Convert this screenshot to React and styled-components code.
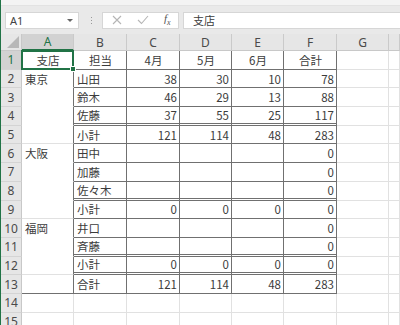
import styled, { createGlobalStyle, css } from 'styled-components';

const GlobalStyle = createGlobalStyle`
  html, body { margin: 0; padding: 0; background: #fff; }
  body { font-family: "Noto Sans CJK JP", "Noto Sans", sans-serif; }
`;

const COLS = ['A', 'B', 'C', 'D', 'E', 'F', 'G', ''];

const DATA = [
  ['支店', '担当', '4月', '5月', '6月', '合計'],
  ['東京', '山田', 38, 30, 10, 78],
  ['', '鈴木', 46, 29, 13, 88],
  ['', '佐藤', 37, 55, 25, 117],
  ['', '小計', 121, 114, 48, 283],
  ['大阪', '田中', '', '', '', 0],
  ['', '加藤', '', '', '', 0],
  ['', '佐々木', '', '', '', 0],
  ['', '小計', 0, 0, 0, 0],
  ['福岡', '井口', '', '', '', 0],
  ['', '斉藤', '', '', '', 0],
  ['', '小計', 0, 0, 0, 0],
  ['', '合計', 121, 114, 48, 283],
  [],
  [],
];

// rows (1-based) whose bottom edge is a double line
const DOUBLE_BOTTOM = [4, 8, 11, 12];
// rows where a new branch group starts in column A
const GROUP_START = [2, 6, 10, 13];

const App = () => {
  const cells = [];
  DATA.forEach((row, r) => {
    const rowNo = r + 1;
    const inTable = rowNo <= 13;
    cells.push(
      <RowHead key={`h${rowNo}`} $active={rowNo === 1}>{rowNo}</RowHead>
    );
    COLS.forEach((col, c) => {
      const value = row[c] ?? '';
      let right = 'light';
      let bottom = 'light';
      if (inTable && c <= 5) {
        right = 'dark';
        if (c === 0) {
          bottom = GROUP_START.includes(rowNo + 1) ? 'light' : 'none';
          if (rowNo === 1 || rowNo === 13) bottom = 'dark';
        } else {
          bottom = DOUBLE_BOTTOM.includes(rowNo) ? 'double' : 'dark';
        }
      }
      const align = rowNo === 1 ? 'center' : typeof value === 'number' ? 'right' : 'left';
      cells.push(
        <Cell
          key={`${col}${rowNo}`}
          $right={right}
          $bottom={bottom}
          $align={align}
          $selected={rowNo === 1 && c === 0}
        >
          {value}
        </Cell>
      );
    });
  });

  return (
    <>
      <GlobalStyle />
      <Window>
        <TopStrip />
        <FormulaBar>
          <NameBox>
            <span>A1</span>
            <DropArrow />
          </NameBox>
          <Grip>
            <i /><i /><i />
          </Grip>
          <ActionBox>
            <Action>
              <svg width="10" height="10" viewBox="0 0 10 10">
                <path d="M1 1 L9 9 M9 1 L1 9" stroke="#b5b5b5" strokeWidth="1.1" />
              </svg>
            </Action>
            <Action>
              <svg width="12" height="10" viewBox="0 0 12 10">
                <path d="M1 5 L4.5 8.5 L11 1" stroke="#b5b5b5" strokeWidth="1.1" fill="none" />
              </svg>
            </Action>
            <FxLabel>
              f<sub>x</sub>
            </FxLabel>
          </ActionBox>
          <Formula>支店</Formula>
        </FormulaBar>
        <Sheet>
          <Corner>
            <svg width="12" height="12" viewBox="0 0 12 12">
              <path d="M12 0 L12 12 L0 12 Z" fill="#b8b8b8" />
            </svg>
          </Corner>
          {COLS.map((col) => (
            <ColHead key={`c${col}`} $active={col === 'A'}>{col}</ColHead>
          ))}
          {cells}
        </Sheet>
      </Window>
    </>
  );
};

export default App;

const Window = styled.div`
  width: 400px;
  height: 325px;
  overflow: hidden;
  border-left: 1px solid #217346;
  box-sizing: border-box;
  background: #fff;
`;

const TopStrip = styled.div`
  height: 5px;
  background: #f3f3f3;
  border-bottom: 1px solid #e2e2e2;
`;

const FormulaBar = styled.div`
  display: flex;
  align-items: center;
  height: 28px;
  padding-left: 4px;
  background: #e9e9e9;
  box-sizing: border-box;
`;

const NameBox = styled.div`
  display: flex;
  align-items: center;
  justify-content: space-between;
  width: 74px;
  height: 17px;
  padding: 0 5px 0 4px;
  box-sizing: border-box;
  background: #fff;
  border: 1px solid #d6d6d6;
  font-family: "Noto Sans", sans-serif;
  font-size: 11px;
  color: #444;
`;

const DropArrow = styled.span`
  width: 0;
  height: 0;
  border-left: 3px solid transparent;
  border-right: 3px solid transparent;
  border-top: 3px solid #666;
`;

const Grip = styled.div`
  display: flex;
  flex-direction: column;
  gap: 2px;
  margin: 0 10px 0 12px;
  i {
    width: 1px;
    height: 1px;
    background: #999;
  }
`;

const ActionBox = styled.div`
  display: flex;
  align-items: center;
  width: 77px;
  height: 17px;
  box-sizing: border-box;
  background: #fff;
  border: 1px solid #d6d6d6;
  padding-left: 9px;
  gap: 15px;
`;

const Action = styled.span`
  display: flex;
  align-items: center;
`;

const FxLabel = styled.span`
  font-family: "Liberation Serif", serif;
  font-style: italic;
  font-size: 11px;
  color: #555;
  sub {
    font-size: 8px;
  }
`;

const Formula = styled.div`
  flex: 1;
  height: 17px;
  margin-left: 4px;
  padding-left: 9px;
  box-sizing: border-box;
  background: #fff;
  border: 1px solid #d6d6d6;
  border-right: none;
  font-size: 11px;
  line-height: 15px;
  color: #3c3c3c;
`;

const Sheet = styled.div`
  display: grid;
  grid-template-columns: 21px 52px 53px 53px 52px 52px 53px 52px 1fr;
  grid-template-rows: 17px repeat(15, 18.7px);
`;

const Corner = styled.div`
  display: flex;
  align-items: flex-end;
  justify-content: flex-end;
  padding: 0 2px 2px 0;
  background: #e6e6e6;
  border-right: 1px solid #c8c8c8;
  border-bottom: 1px solid #c8c8c8;
`;

const ColHead = styled.div`
  display: flex;
  align-items: center;
  justify-content: center;
  background: ${(p) => (p.$active ? '#d2d2d2' : '#e6e6e6')};
  color: ${(p) => (p.$active ? '#217346' : '#4a4a4a')};
  border-right: 1px solid #cacaca;
  border-bottom: ${(p) => (p.$active ? '2px solid #217346' : '1px solid #c8c8c8')};
  box-sizing: border-box;
  font-family: "Noto Sans", sans-serif;
  font-size: 12px;
`;

const RowHead = styled.div`
  display: flex;
  align-items: center;
  justify-content: center;
  background: ${(p) => (p.$active ? '#d2d2d2' : '#e6e6e6')};
  color: ${(p) => (p.$active ? '#217346' : '#4a4a4a')};
  border-right: 1px solid #c8c8c8;
  border-bottom: 1px solid #d4d4d4;
  box-sizing: border-box;
  font-family: "Noto Sans", sans-serif;
  font-size: 12px;
  overflow: hidden;
`;

const edge = {
  light: '1px solid #e1e1e1',
  dark: '1px solid #707070',
  double: '3px double #707070',
  none: '1px solid #fff',
};

const Cell = styled.div`
  position: relative;
  display: flex;
  align-items: center;
  justify-content: ${(p) => ({ left: 'flex-start', right: 'flex-end', center: 'center' })[p.$align]};
  padding: 0 2px 0 3px;
  box-sizing: border-box;
  border-right: ${(p) => edge[p.$right]};
  border-bottom: ${(p) => edge[p.$bottom]};
  font-size: 11.5px;
  color: #3c3c3c;
  white-space: nowrap;
  ${(p) =>
    p.$selected &&
    css`
      &::after {
        content: '';
        position: absolute;
        left: -1px;
        top: -1px;
        right: -1px;
        bottom: -1px;
        border: 2px solid #217346;
      }
      &::before {
        content: '';
        position: absolute;
        right: -3px;
        bottom: -3px;
        width: 4px;
        height: 4px;
        background: #217346;
        border: 1px solid #fff;
        z-index: 1;
      }
    `}
`;
